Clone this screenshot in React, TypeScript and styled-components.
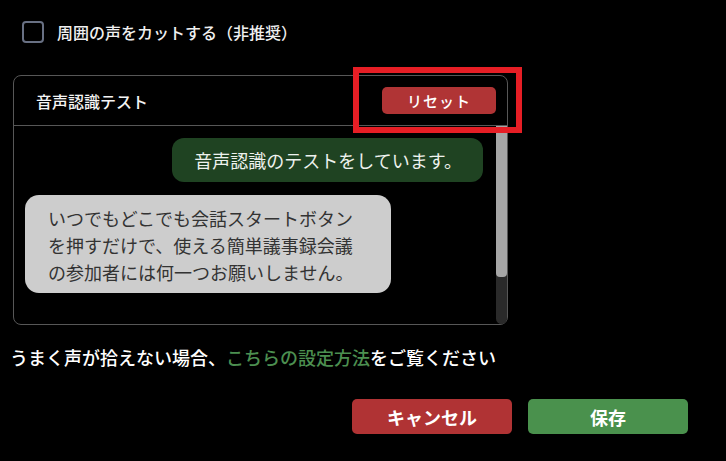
import styled, { createGlobalStyle } from 'styled-components';

const GlobalStyle = createGlobalStyle`
  html, body {
    margin: 0;
    padding: 0;
    background: #000;
  }
  body {
    font-family: "Noto Sans CJK JP", "Noto Sans", sans-serif;
    color: #fff;
  }
`;

const Page = styled.main`
  display: flex;
  flex-direction: column;
  width: 726px;
  height: 461px;
  box-sizing: border-box;
  padding-top: 20px;
  background: #000;
`;

const OptionRow = styled.label`
  display: flex;
  align-items: center;
  gap: 13px;
  height: 24px;
  margin-left: 22px;
  font-size: 16px;
  font-weight: 500;
  color: #f0f0f0;
`;

const CheckBox = styled.span`
  display: block;
  width: 22px;
  height: 22px;
  box-sizing: border-box;
  border: 2px solid #687083;
  border-radius: 4px;
`;

const Panel = styled.section`
  position: relative;
  display: flex;
  flex-direction: column;
  width: 495px;
  height: 250px;
  box-sizing: border-box;
  margin: 31px 0 0 13px;
  border: 1px solid #575757;
  border-radius: 8px;
`;

const PanelHeader = styled.header`
  display: flex;
  align-items: center;
  justify-content: space-between;
  height: 50px;
  box-sizing: border-box;
  padding: 0 11px 0 22px;
  border-bottom: 1px solid #575757;
`;

const PanelTitle = styled.h2`
  margin: 0;
  font-size: 16px;
  font-weight: 500;
  color: #f4f4f4;
`;

const SmallButton = styled.button`
  width: 114px;
  height: 27px;
  padding: 0;
  border: none;
  border-radius: 5px;
  background: #b03435;
  color: #fff;
  font-family: inherit;
  font-size: 15px;
  font-weight: 500;
  letter-spacing: 1px;
`;

const Highlight = styled.div`
  position: absolute;
  left: 339px;
  top: -9px;
  width: 169px;
  height: 66px;
  box-sizing: border-box;
  border: 6px solid #e61e25;
  pointer-events: none;
`;

const PanelBody = styled.div`
  display: flex;
  flex: 1;
  min-height: 0;
`;

const MessageList = styled.div`
  display: flex;
  flex: 1;
  flex-direction: column;
  gap: 13px;
  padding: 12px 13px 0 11px;
`;

const Bubble = styled.div<{ $own?: boolean }>`
  align-self: ${({ $own }) => ($own ? 'flex-end' : 'flex-start')};
  box-sizing: border-box;
  font-size: 18px;
  line-height: 27px;
  ${({ $own }) =>
    $own
      ? `
    padding: 9px 21px 8px 22px;
    border-radius: 12px;
    background: #1f4322;
    color: #eef2ee;
  `
      : `
    width: 366px;
    padding: 10px 23px 7px 23px;
    border-radius: 14px;
    background: #cdcdcd;
    color: #333;
  `}
`;

const ScrollTrack = styled.div`
  display: flex;
  flex-direction: column;
  width: 11px;
  background: #2a2a2a;
  border-radius: 0 0 6px 6px;
`;

const ScrollThumb = styled.div`
  height: 151px;
  background: #a6a6a6;
  border-radius: 0 0 4px 4px;
`;

const HelpText = styled.p`
  margin: 19px 0 0 10px;
  font-size: 18px;
  font-weight: 500;
  line-height: 26px;
  color: #fff;
`;

const Link = styled.a`
  color: #4c8f50;
  text-decoration: none;
`;

const Actions = styled.div`
  display: flex;
  justify-content: flex-end;
  gap: 16px;
  margin-top: 29px;
  padding-right: 38px;
`;

const ActionButton = styled.button<{ $tone: 'danger' | 'primary' }>`
  width: 160px;
  height: 35px;
  padding: 0;
  border: none;
  border-radius: 5px;
  background: ${({ $tone }) => ($tone === 'danger' ? '#b03334' : '#4a914d')};
  color: #fff;
  font-family: inherit;
  font-size: 18px;
  font-weight: 700;
`;

export default function App(): JSX.Element {
  return (
    <Page>
      <GlobalStyle />
      <OptionRow>
        <CheckBox />
        {'周囲の声をカットする（非推奨）'}
      </OptionRow>
      <Panel>
        <PanelHeader>
          <PanelTitle>{'音声認識テスト'}</PanelTitle>
          <SmallButton>{'リセット'}</SmallButton>
        </PanelHeader>
        <PanelBody>
          <MessageList>
            <Bubble $own>{'音声認識のテストをしています。'}</Bubble>
            <Bubble>
              {'いつでもどこでも会話スタートボタン'}
              <br />
              {'を押すだけで、使える簡単議事録会議'}
              <br />
              {'の参加者には何一つお願いしません。'}
            </Bubble>
          </MessageList>
          <ScrollTrack>
            <ScrollThumb />
          </ScrollTrack>
        </PanelBody>
        <Highlight />
      </Panel>
      <HelpText>
        {'うまく声が拾えない場合、'}
        <Link href="#">{'こちらの設定方法'}</Link>
        {'をご覧ください'}
      </HelpText>
      <Actions>
        <ActionButton $tone="danger">{'キャンセル'}</ActionButton>
        <ActionButton $tone="primary">{'保存'}</ActionButton>
      </Actions>
    </Page>
  );
}
